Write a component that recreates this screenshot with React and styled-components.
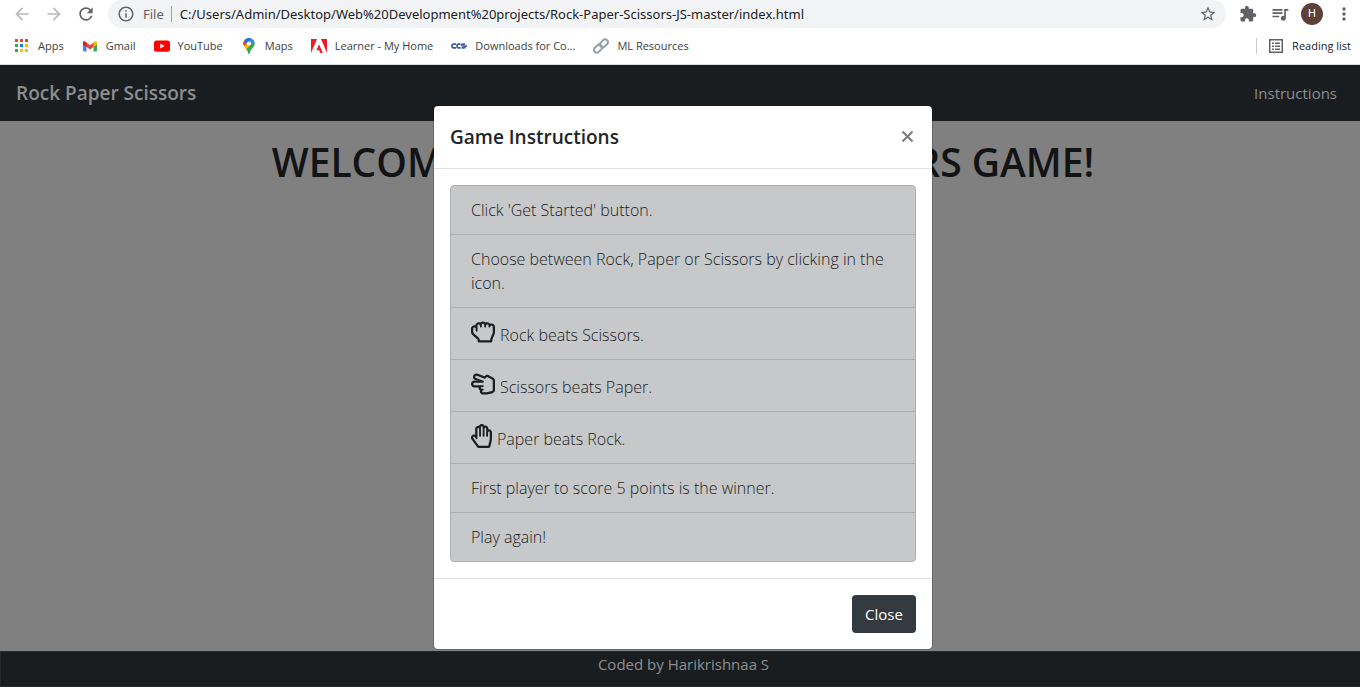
import React from "react";
import styled, { createGlobalStyle } from "styled-components";
import { FaRegHandRock, FaRegHandScissors, FaRegHandPaper } from "react-icons/fa";
import {
  MdArrowBack,
  MdArrowForward,
  MdRefresh,
  MdInfoOutline,
  MdStarBorder,
  MdExtension,
  MdQueueMusic,
  MdMoreVert,
} from "react-icons/md";

const GlobalStyle = createGlobalStyle`
  *, *::before, *::after { box-sizing: border-box; }
  html, body, #root { height: 100%; }
  body {
    margin: 0;
    font-family: "Segoe UI", "Open Sans", "Noto Sans", sans-serif;
    font-size: 15px;
    line-height: 24px;
    color: #212529;
    background: #fff;
  }
  button, input { font: inherit; }
  h1, h2, ul { margin: 0; padding: 0; }
`;

const Window = styled.div`
  min-height: 100%;
  display: flex;
  flex-direction: column;
`;

const Toolbar = styled.header`
  display: flex;
  align-items: center;
  height: 28px;
  padding: 0 6px 0 12px;
  gap: 12px;
`;

const ToolButton = styled.button`
  display: flex;
  align-items: center;
  justify-content: center;
  width: 20px;
  height: 20px;
  padding: 0;
  border: 0;
  background: none;
  color: ${(p) => (p.$faded ? "#b9bbbe" : "#5f6368")};
  svg {
    flex: none;
    width: ${(p) => (p.$small ? 18 : 20)}px;
    height: ${(p) => (p.$small ? 18 : 20)}px;
  }
`;

const AddressBar = styled.div`
  flex: 1;
  display: flex;
  align-items: center;
  height: 28px;
  padding: 0 8px 0 9px;
  gap: 8px;
  border-radius: 14px;
  background: #f1f3f4;
  color: #5f6368;
  font-family: "Segoe UI", "Noto Sans", sans-serif;
  font-size: 13px;
  & > svg { width: 18px; height: 18px; }
`;

const Scheme = styled.span`
  padding-right: 7px;
  border-right: 1px solid #9aa0a6;
  line-height: 16px;
`;

const AddressInput = styled.input`
  flex: 1;
  min-width: 0;
  padding: 0;
  border: 0;
  outline: 0;
  background: none;
  color: #202124;
`;

const Avatar = styled.button`
  width: 22px;
  height: 22px;
  margin: 0 -1px;
  padding: 0;
  border: 0;
  border-radius: 50%;
  background: #5d4037;
  color: #fff;
  font-family: Roboto, sans-serif;
  font-size: 11px;
  line-height: 22px;
`;

const Bookmarks = styled.nav`
  display: flex;
  align-items: center;
  height: 37px;
  padding: 0 9px 0 14px;
  gap: 18px;
  border-bottom: 1px solid #dadce0;
`;

const Bookmark = styled.a`
  display: flex;
  align-items: center;
  gap: 8px;
  color: #3c4043;
  font-size: 11px;
  line-height: 16px;
  text-decoration: none;
  white-space: nowrap;
  svg { flex: none; width: 16px; height: 16px; }
`;

const ReadingList = styled(Bookmark)`
  margin-left: auto;
  padding-left: 11px;
  border-left: 1px solid #c8cacd;
  color: #202124;
`;

const Page = styled.div`
  position: relative;
  flex: 1;
  display: flex;
  flex-direction: column;
  background: #808080;
`;

const Navbar = styled.nav`
  display: flex;
  align-items: center;
  justify-content: space-between;
  height: 56px;
  padding: 0 23px 0 16px;
  background: #1a1d20;
`;

const NavLink = styled.a`
  color: #8c8e8f;
  text-decoration: none;
  font-size: ${(p) => (p.$brand ? "19px" : "15px")};
  font-weight: ${(p) => (p.$brand ? 600 : 400)};
`;

const Main = styled.main`
  flex: 1;
  padding: 17px 0 0 6px;
  text-align: center;
`;

const Welcome = styled.h1`
  font-size: 39px;
  font-weight: 600;
  line-height: 48px;
  color: #111315;
  white-space: nowrap;
`;

const Credits = styled.footer`
  height: 36px;
  padding-left: 6px;
  border: 1px solid #25282b;
  border-right: 0;
  background: #1a1d20;
  color: #8c8e8f;
  text-align: center;
`;

const Backdrop = styled.div`
  position: absolute;
  inset: 0;
  display: flex;
  align-items: center;
  justify-content: center;
  padding: 2px 0 0 6px;
`;

const Dialog = styled.section`
  width: 500px;
  max-width: 100%;
  border: 1px solid rgba(0, 0, 0, 0.2);
  border-radius: 5px;
  background: #fff;
  background-clip: padding-box;
`;

const DialogHeader = styled.header`
  display: flex;
  align-items: center;
  justify-content: space-between;
  height: 63px;
  padding: 0 16px;
  border-bottom: 1px solid #dee2e6;
`;

const DialogTitle = styled.h2`
  font-size: 19px;
  font-weight: 600;
  line-height: 30px;
`;

const DismissButton = styled.button`
  display: flex;
  padding: 0;
  border: 0;
  background: none;
  color: #7f7f7f;
  svg { width: 17px; height: 17px; }
`;

const Steps = styled.ul`
  margin: 16px;
  border: 1px solid #adaeb0;
  border-radius: 4px;
  background: #c6c8ca;
  color: #1b1e21;
  font-size: 16px;
  font-weight: 300;
  list-style: none;
`;

const Step = styled.li`
  padding: 12px 20px;
  & + & { border-top: 1px solid #adaeb0; }
`;

const IconStep = styled(Step)`
  display: flex;
  align-items: flex-end;
  gap: 5px;
  height: 52px;
  svg {
    flex: none;
    width: ${(p) => p.$iconWidth}px;
    height: 24px;
    margin-bottom: 3px;
  }
`;

const DialogFooter = styled.footer`
  display: flex;
  justify-content: flex-end;
  padding: 16px;
  border-top: 1px solid #dee2e6;
`;

const CloseButton = styled.button`
  min-width: 64px;
  height: 38px;
  padding: 0 12px;
  border: 0;
  border-radius: 4px;
  background: #343a40;
  color: #fff;
`;

const AppsIcon = () => (
  <svg viewBox="0 0 16 16" aria-hidden="true">
    {["#ea4335", "#ea4335", "#ea4335", "#34a853", "#1a73e8", "#fbbc04", "#34a853", "#fbbc04", "#fbbc04"].map((c, i) => (
      <rect key={i} x={1 + (i % 3) * 5} y={1 + Math.floor(i / 3) * 5} width="3" height="3" fill={c} />
    ))}
  </svg>
);

const GmailIcon = () => (
  <svg viewBox="0 0 16 16" aria-hidden="true">
    <path d="M1 4v8.500q0 1 1 1h2.500V6.500z" fill="#4285f4" />
    <path d="M11.500 6.500v7H14q1 0 1-1V4z" fill="#34a853" />
    <path d="M4 4.300V8.500l4 3 4-3V4.300L8 7.300z" fill="#ea4335" />
    <path d="M1 4.500V6.500l3.500 2.400V4.700L3.200 3.600C2.300 2.900 1 3.400 1 4.500z" fill="#c5221f" />
    <path d="M15 4.500V6.500l-3.500 2.400V4.700l1.300-1.100c.9-.7 2.200-.2 2.200.9z" fill="#fbbc04" />
  </svg>
);

const YouTubeIcon = () => (
  <svg viewBox="0 0 16 16" aria-hidden="true">
    <rect y="2.500" width="16" height="11.300" rx="2.500" fill="#f00" />
    <path d="M6.300 5.600v5l4.300-2.500z" fill="#fff" />
  </svg>
);

const MapsIcon = () => (
  <svg viewBox="0 0 16 16" aria-hidden="true">
    <defs>
      <clipPath id="map-pin">
        <path d="M8 0a5.500 5.500 0 0 0-5.500 5.500C2.500 9.500 7 11 7.300 15.300q.7 1.200 1.400 0C9 11 13.500 9.500 13.500 5.500A5.500 5.500 0 0 0 8 0z" />
      </clipPath>
    </defs>
    <g clipPath="url(#map-pin)">
      <rect width="16" height="16" fill="#34a853" />
      <path d="M0 12 14-4H0z" fill="#1a73e8" />
      <path d="M2 2.500 6 5l-3 4-3-1z" fill="#ea4335" />
      <path d="M2 9l4-3.500L9 8l-5 6z" fill="#fbbc04" />
      <path d="M7 4.500 11.500-1 16 4 9.500 7z" fill="#4285f4" />
      <path d="M9 7.500 14 2v10l-6 4-3.500-4z" fill="#34a853" />
    </g>
    <circle cx="8" cy="5.500" r="2.100" fill="#fff" />
  </svg>
);

const AdobeIcon = () => (
  <svg viewBox="0 0 16 16" aria-hidden="true">
    <path d="M0 1h6L0 15zM10 1h6v14zM8 6.200 11.800 15H9.300l-1.100-2.800H5.400z" fill="#ed1c24" />
  </svg>
);

const CcsIcon = () => (
  <svg viewBox="0 0 16 16" fill="none" stroke="#3d5ba9" strokeWidth="1.700" aria-hidden="true">
    <path d="M5 6.200H2.600Q1 6.200 1 8t1.600 1.800H5M9.600 6.200H7.500Q6 6.200 6 8t1.500 1.800h2.100M14 6.200h-2.300q-1 0-1 .9 0 .9 1 .9h1.200q1.100 0 1.100 .9t-1.100.9h-2.300M13.600 8H16" />
  </svg>
);

const LinkIcon = () => (
  <svg viewBox="0 0 16 16" fill="none" stroke="#90a4ae" strokeWidth="2" aria-hidden="true">
    <rect x="6.400" y="2.600" width="9" height="5.600" rx="2.800" transform="rotate(-45 10.900 5.400)" />
    <rect x=".6" y="7.800" width="9" height="5.600" rx="2.800" transform="rotate(-45 5.100 10.600)" />
  </svg>
);

const ReadingIcon = () => (
  <svg viewBox="0 0 16 16" fill="none" stroke="#5f6368" strokeWidth="1.500" aria-hidden="true">
    <rect x="1.750" y="1.750" width="12.500" height="12.500" />
    <path d="M4 5.250h2M7 5.250h5M4 8.250h2M7 8.250h5M4 11.250h2M7 11.250h5" />
  </svg>
);

const CrossIcon = () => (
  <svg viewBox="0 0 17 17" fill="none" stroke="currentColor" strokeWidth="2.200" aria-hidden="true">
    <path d="M3.500 3.500l10 10M13.500 3.500l-10 10" />
  </svg>
);

const bookmarks = [
  ["Apps", AppsIcon],
  ["Gmail", GmailIcon],
  ["YouTube", YouTubeIcon],
  ["Maps", MapsIcon],
  ["Learner - My Home", AdobeIcon],
  ["Downloads for Co...", CcsIcon],
  ["ML Resources", LinkIcon],
];

const beats = [
  ["Rock beats Scissors.", FaRegHandRock, 24],
  ["Scissors beats Paper.", FaRegHandScissors, 24],
  ["Paper beats Rock.", FaRegHandPaper, 21],
];

export default function App() {
  return (
    <Window>
      <GlobalStyle />
      <Toolbar>
        <ToolButton $faded aria-label="Back"><MdArrowBack /></ToolButton>
        <ToolButton $faded aria-label="Forward"><MdArrowForward /></ToolButton>
        <ToolButton aria-label="Reload"><MdRefresh /></ToolButton>
        <AddressBar>
          <MdInfoOutline />
          <Scheme>File</Scheme>
          <AddressInput
            aria-label="Address"
            defaultValue="C:/Users/Admin/Desktop/Web%20Development%20projects/Rock-Paper-Scissors-JS-master/index.html"
          />
          <ToolButton $small aria-label="Bookmark this page"><MdStarBorder /></ToolButton>
        </AddressBar>
        <ToolButton $small aria-label="Extensions"><MdExtension /></ToolButton>
        <ToolButton aria-label="Media controls"><MdQueueMusic /></ToolButton>
        <Avatar aria-label="Profile">H</Avatar>
        <ToolButton aria-label="Menu"><MdMoreVert /></ToolButton>
      </Toolbar>
      <Bookmarks aria-label="Bookmarks">
        {bookmarks.map(([label, Icon]) => (
          <Bookmark href="#" key={label}><Icon />{label}</Bookmark>
        ))}
        <ReadingList href="#"><ReadingIcon />Reading list</ReadingList>
      </Bookmarks>
      <Page>
        <Navbar>
          <NavLink href="#" $brand>Rock Paper Scissors</NavLink>
          <NavLink href="#">Instructions</NavLink>
        </Navbar>
        <Main>
          <Welcome>WELCOME TO ROCK PAPER SCISSORS GAME!</Welcome>
        </Main>
        <Credits>Coded by Harikrishnaa S</Credits>
        <Backdrop>
          <Dialog role="dialog" aria-labelledby="instructions-title">
            <DialogHeader>
              <DialogTitle id="instructions-title">Game Instructions</DialogTitle>
              <DismissButton aria-label="Dismiss"><CrossIcon /></DismissButton>
            </DialogHeader>
            <Steps>
              <Step>Click 'Get Started' button.</Step>
              <Step>Choose between Rock, Paper or Scissors by clicking in the icon.</Step>
              {beats.map(([label, Icon, width]) => (
                <IconStep key={label} $iconWidth={width}><Icon />{label}</IconStep>
              ))}
              <Step>First player to score 5 points is the winner.</Step>
              <Step>Play again!</Step>
            </Steps>
            <DialogFooter>
              <CloseButton>Close</CloseButton>
            </DialogFooter>
          </Dialog>
        </Backdrop>
      </Page>
    </Window>
  );
}
